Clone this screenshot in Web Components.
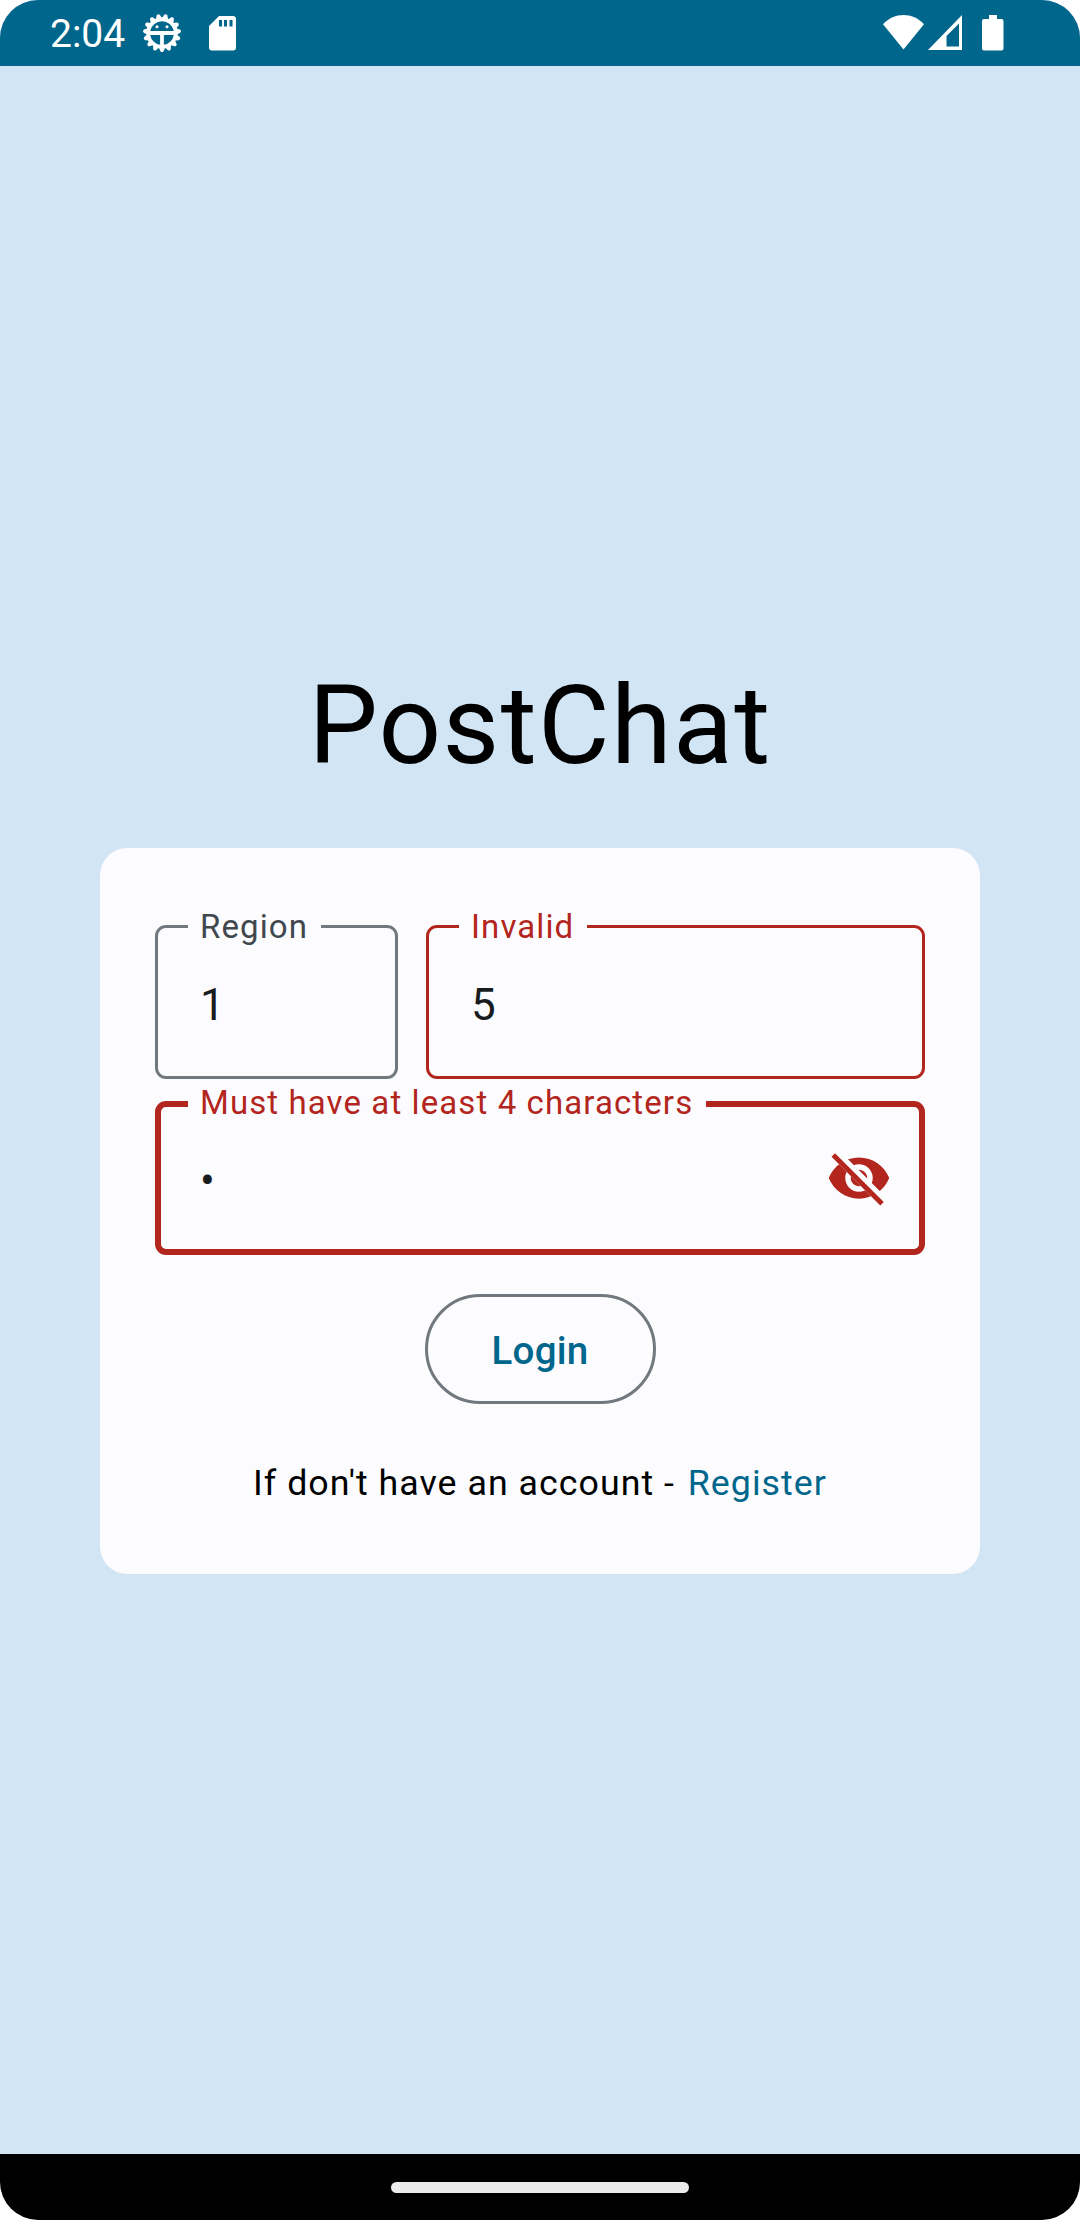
<!DOCTYPE html>
<html lang="en">
<head>
<meta charset="utf-8">
<title>PostChat</title>
<style>
html,body{margin:0;padding:0;background:#fff}
body{font-family:Roboto,"Noto Sans",sans-serif}
</style>
</head>
<body>
<post-app></post-app>
<script>
const define = (name, html) => customElements.define(name, class extends HTMLElement {
  constructor() {
    super();
    const t = document.createElement('template');
    t.innerHTML = html;
    this.attachShadow({mode: 'open'}).append(t.content.cloneNode(true));
  }
});

const teeth = Array.from({length: 15}, (_, i) =>
  `<path d="M-3.200-14.500L-1.600-18.200Q0-20 1.600-18.200L3.200-14.500Z" transform="rotate(${i * 24 + 12})"/>`).join('');

define('status-bar', `
<style>
:host{display:flex;height:66px;box-sizing:border-box;background:#00668b;color:#fff;justify-content:space-between;padding:0 76px 0 50px}
div{display:flex;align-items:flex-start}
span{font-size:39px;line-height:69px}
svg{display:block;fill:#fff;flex:none}
.gear{margin:13px 0 0 16.5px}
.sd{margin:16px 0 0 27.5px}
.wifi{margin-top:15px}.sig{margin:15px 0 0 4px}.bat{margin:15px 0 0 20px}
</style>
<div>
<span>2:04</span>
<svg class="gear" width="40" height="40" viewBox="-20 -20 40 40">${teeth}
<path fill-rule="evenodd" d="M-15.600 0a15.600 15.600 0 1 0 31.200 0a15.600 15.600 0 1 0-31.200 0ZM-11.800 -1.900H11.800A12 12 0 0 0-11.800-1.900ZM-11.800 1.900A12 12 0 0 0-1.900 11.800V1.900ZM11.800 1.900A12 12 0 0 1 1.900 11.800V1.900Z"/>
<circle cx="-5" cy="-6.200" r="1.500"/><circle cx="5" cy="-6.200" r="1.500"/></svg>
<svg class="sd" width="27" height="35" viewBox="0 0 27 35"><path fill-rule="evenodd" d="M10 0H24Q27 0 27 3V31.500Q27 34.500 24 34.500H3Q0 34.500 0 31.500V10ZM10 4V10.500H13V4ZM15 4V10.500H18V4ZM20.500 4V10.500H23.500V4Z"/></svg>
</div>
<div>
<svg class="wifi" width="41" height="35" viewBox="0 0 41 35"><path d="M0 9.300C11.500-3 29.500-3 41 9.300L20.500 34.500Z"/></svg>
<svg class="sig" width="34" height="35" viewBox="0 0 34 35"><path fill-rule="evenodd" d="M34 0V35H0ZM31 8.500L18.500 21V31.500H31Z"/></svg>
<svg class="bat" width="22" height="36" viewBox="0 0 22 36"><path d="M7 0H15V4H19.500Q21.500 4 21.500 6V33.500Q21.500 35.500 19.500 35.500H2Q0 35.500 0 33.500V6Q0 4 2 4H7Z"/></svg>
</div>`);

define('nav-bar', `
<style>
:host{display:flex;height:66px;background:#000;justify-content:center;align-items:center}
i{width:298px;height:11px;border-radius:5.5px;background:#ebebeb}
</style><i></i>`);

define('outlined-field', `
<style>
:host{display:flex;box-sizing:border-box;position:relative;height:154px;border:3px solid #71787e;border-radius:11px;padding:6px 33px 0 42px;align-items:center;justify-content:space-between;color:#191c1e;--label:#41484d}
:host([error]){border-color:#b3261e;--label:#b3261e}
:host([focused]){border-width:6px;padding:6px 27px 0 39px}
label{position:absolute;left:30px;top:-23px;padding:0 13px 0 12px;background:#fcfcff;color:var(--label);font-size:33px;line-height:44px;letter-spacing:1.1px;white-space:nowrap}
:host([focused]) label{left:27px;top:-26px}
.v{font-size:44px;line-height:66px;letter-spacing:1.375px}
</style>
<label><slot name="label"></slot></label><span class="v"><slot></slot></span><slot name="end"></slot>`);

define('eye-off', `
<style>:host{display:block;width:66px;height:66px;margin-top:-6px;color:#b3261e}svg{display:block}</style>
<svg width="66" height="66" viewBox="0 0 24 24"><defs><clipPath id="c"><path d="M2 4.270L19.730 22L22.270 19.460L4.540 1.730V1H23V23H1V4.270Z"/></clipPath></defs>
<path clip-path="url(#c)" fill="currentColor" fill-rule="evenodd" d="M12 4.500C7 4.500 2.730 7.610 1 12C2.730 16.390 7 19.500 12 19.500C17 19.500 21.270 16.390 23 12C21.270 7.610 17 4.500 12 4.500ZM12 17C9.240 17 7 14.760 7 12S9.240 7 12 7S17 9.240 17 12S14.760 17 12 17ZM12 9C10.340 9 9 10.340 9 12S10.340 15 12 15S15 13.660 15 12S13.660 9 12 9Z"/>
<path d="M3.270 4.270L19.740 20.740" stroke="currentColor" stroke-width="1.800" stroke-linecap="square"/></svg>`);

define('outlined-button', `
<style>
:host{display:flex;align-self:center;box-sizing:border-box;width:231px;height:110px;border:3px solid #71787e;border-radius:55px;justify-content:center;align-items:center}
button{all:unset;color:#00668b;font-weight:500;font-size:38.5px;line-height:55px;letter-spacing:.275px;padding-top:3px}
</style><button><slot></slot></button>`);

define('login-card', `
<style>
:host{display:flex;flex-direction:column;box-sizing:border-box;width:880px;height:726px;padding:77px 55px 0;background:#fcfcff;border-radius:27.5px}
.row{display:flex;gap:28px;margin-bottom:22px}
.region{flex:0 0 243px}.id{flex:1}
outlined-button{margin-top:39px}
p{margin:54px 0 0;text-align:center;font-size:35.75px;line-height:50px;letter-spacing:1.02px;color:#000;white-space:pre}
a{color:#00668b;margin-left:3px}
</style>
<div class="row">
<outlined-field class="region"><span slot="label">Region</span>1</outlined-field>
<outlined-field class="id" error><span slot="label">Invalid</span>5</outlined-field>
</div>
<outlined-field error focused><span slot="label">Must have at least 4 characters</span>•<eye-off slot="end"></eye-off></outlined-field>
<outlined-button>Login</outlined-button>
<p>If don't have an account - <a>Register</a></p>`);

define('post-app', `
<style>
:host{display:flex;flex-direction:column;width:1080px;height:2220px;background:#d1e5f4;border-radius:38px;overflow:hidden}
main{flex:1;display:flex;flex-direction:column;align-items:center}
h1{margin:594px 0 57px;font-weight:400;font-size:110px;line-height:131px;letter-spacing:1.375px;color:#000}
</style>
<status-bar></status-bar>
<main><h1>PostChat</h1><login-card></login-card></main>
<nav-bar></nav-bar>`);
</script>
</body>
</html>
